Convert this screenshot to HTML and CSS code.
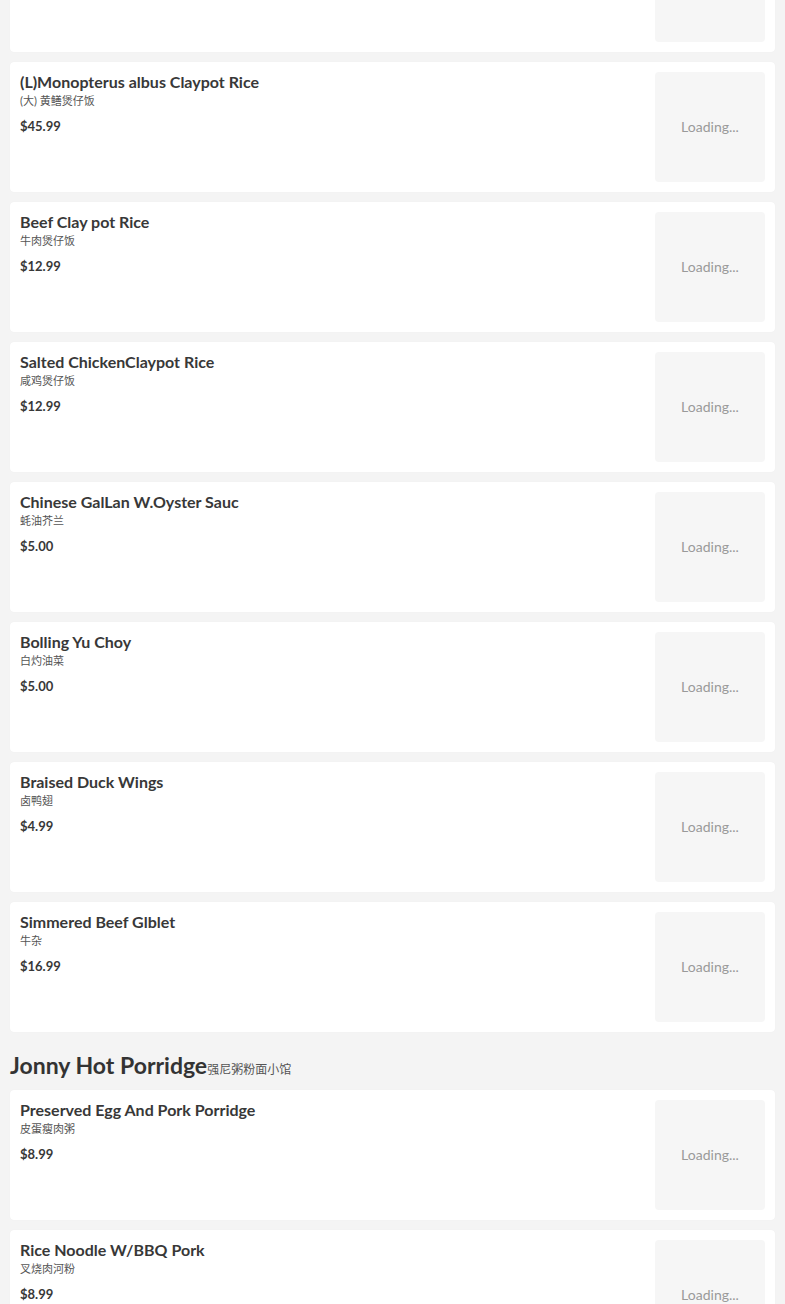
FILE: index.html
```html
<!DOCTYPE html>
<html lang="en">
<head>
    <meta charset="UTF-8">
    <meta name="viewport" content="width=device-width, initial-scale=1.0">
    <title>Menu</title>
    <link rel="stylesheet" href="styles.css">
</head>
<body>
    <div class="menu">
        <div class="section">
            <div class="item">
                <div class="item-info">
                    <p class="item-name">(S)Monopterus albus Claypot Rice</p>
                    <p class="item-cn">(小) 黄鳝煲仔饭</p>
                    <p class="item-price">$35.99</p>
                </div>
                <div class="item-photo">Loading...</div>
            </div>

            <div class="item">
                <div class="item-info">
                    <p class="item-name">(L)Monopterus albus Claypot Rice</p>
                    <p class="item-cn">(大) 黄鳝煲仔饭</p>
                    <p class="item-price">$45.99</p>
                </div>
                <div class="item-photo">Loading...</div>
            </div>

            <div class="item">
                <div class="item-info">
                    <p class="item-name">Beef Clay pot Rice</p>
                    <p class="item-cn">牛肉煲仔饭</p>
                    <p class="item-price">$12.99</p>
                </div>
                <div class="item-photo">Loading...</div>
            </div>

            <div class="item">
                <div class="item-info">
                    <p class="item-name">Salted ChickenClaypot Rice</p>
                    <p class="item-cn">咸鸡煲仔饭</p>
                    <p class="item-price">$12.99</p>
                </div>
                <div class="item-photo">Loading...</div>
            </div>

            <div class="item">
                <div class="item-info">
                    <p class="item-name">Chinese GalLan W.Oyster Sauc</p>
                    <p class="item-cn">蚝油芥兰</p>
                    <p class="item-price">$5.00</p>
                </div>
                <div class="item-photo">Loading...</div>
            </div>

            <div class="item">
                <div class="item-info">
                    <p class="item-name">Bolling Yu Choy</p>
                    <p class="item-cn">白灼油菜</p>
                    <p class="item-price">$5.00</p>
                </div>
                <div class="item-photo">Loading...</div>
            </div>

            <div class="item">
                <div class="item-info">
                    <p class="item-name">Braised Duck Wings</p>
                    <p class="item-cn">卤鸭翅</p>
                    <p class="item-price">$4.99</p>
                </div>
                <div class="item-photo">Loading...</div>
            </div>

            <div class="item">
                <div class="item-info">
                    <p class="item-name">Simmered Beef Glblet</p>
                    <p class="item-cn">牛杂</p>
                    <p class="item-price">$16.99</p>
                </div>
                <div class="item-photo">Loading...</div>
            </div>
        </div>

        <div class="section">
            <h2 class="section-title">Jonny Hot Porridge<span class="cn">强尼粥粉面小馆</span></h2>

            <div class="item">
                <div class="item-info">
                    <p class="item-name">Preserved Egg And Pork Porridge</p>
                    <p class="item-cn">皮蛋瘦肉粥</p>
                    <p class="item-price">$8.99</p>
                </div>
                <div class="item-photo">Loading...</div>
            </div>

            <div class="item">
                <div class="item-info">
                    <p class="item-name">Rice Noodle W/BBQ Pork</p>
                    <p class="item-cn">叉烧肉河粉</p>
                    <p class="item-price">$8.99</p>
                </div>
                <div class="item-photo">Loading...</div>
            </div>
        </div>
    </div>
</body>
</html>
```

FILE: styles.css
```css
* {
    margin: 0;
    padding: 0;
    box-sizing: border-box;
}

body {
    font-family: Lato, "Noto Sans CJK SC", sans-serif;
    background: #f4f4f4;
    color: #383838;
    padding: 0 10px;
    overflow: hidden;
}

/* page is shown scrolled: first card is cut off at the top */
.menu {
    margin-top: -78px;
}

.section-title {
    font-size: 23px;
    line-height: 26px;
    height: 26px;
    font-weight: 700;
    color: #333;
    margin: 20px 0 12px;
}

.section-title .cn {
    font-size: 12px;
    line-height: 1;
    font-weight: 400;
    color: #555;
}

.item {
    display: flex;
    justify-content: space-between;
    background: #fff;
    border-radius: 4px;
    padding: 10px;
    margin-bottom: 10px;
    height: 130px;
    box-shadow: 0 0 1px rgba(0,0,0,0.06);
}

.item-info {
    flex: 1;
    min-width: 0;
}

.item-name {
    font-size: 16px;
    line-height: 19px;
    font-weight: 700;
    color: #383838;
}

.item-cn {
    font-size: 11px;
    line-height: 19px;
    color: #555;
}

.item-price {
    font-size: 13px;
    line-height: 18px;
    font-weight: 700;
    color: #383838;
    margin-top: 7px;
}

.item-photo {
    width: 110px;
    height: 110px;
    flex-shrink: 0;
    background: #f6f6f6;
    border-radius: 4px;
    display: flex;
    align-items: center;
    justify-content: center;
    font-size: 14px;
    line-height: 1;
    color: #9a9a9a;
}
```
